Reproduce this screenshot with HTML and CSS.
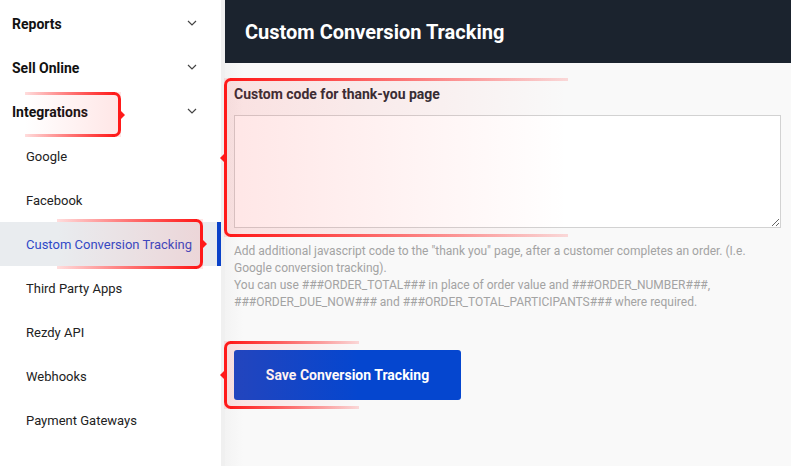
FILE: index.html
```html
<!DOCTYPE html>
<html>
<head>
<meta charset="utf-8">
<link rel="stylesheet" href="styles.css">
</head>
<body>
<div class="layout">
  <aside class="sidebar">
    <div class="nav-group">Reports<svg class="chev" viewBox="0 0 10 6"><path d="M1 1 L5 5 L9 1" fill="none" stroke="#444" stroke-width="1.2"/></svg></div>
    <div class="nav-group">Sell Online<svg class="chev" viewBox="0 0 10 6"><path d="M1 1 L5 5 L9 1" fill="none" stroke="#444" stroke-width="1.2"/></svg></div>
    <div class="nav-group">Integrations<svg class="chev" viewBox="0 0 10 6"><path d="M1 1 L5 5 L9 1" fill="none" stroke="#444" stroke-width="1.2"/></svg></div>
    <div class="nav-item">Google</div>
    <div class="nav-item">Facebook</div>
    <div class="nav-item active">Custom Conversion Tracking</div>
    <div class="nav-item">Third Party Apps</div>
    <div class="nav-item">Rezdy API</div>
    <div class="nav-item">Webhooks</div>
    <div class="nav-item">Payment Gateways</div>
  </aside>
  <main class="main">
    <header class="page-header">Custom Conversion Tracking</header>
    <section class="panel">
      <label class="field-label">Custom code for thank-you page</label>
      <textarea class="code-box"></textarea>
      <p class="help">Add additional javascript code to the "thank you" page, after a customer completes an order. (I.e. Google conversion tracking).<br>You can use ###ORDER_TOTAL### in place of order value and ###ORDER_NUMBER###, ###ORDER_DUE_NOW### and ###ORDER_TOTAL_PARTICIPANTS### where required.</p>
      <button class="save-btn">Save Conversion Tracking</button>
    </section>
  </main>
</div>

<div class="mark mark-right m1"><div class="fill"></div><div class="line top"></div><div class="line bottom"></div><div class="brace"></div><div class="tip"></div></div>
<div class="mark mark-right m2"><div class="fill"></div><div class="line top"></div><div class="line bottom"></div><div class="brace"></div><div class="tip"></div></div>
<div class="mark mark-left m3"><div class="fill"></div><div class="line top"></div><div class="line bottom"></div><div class="brace"></div><div class="tip"></div></div>
<div class="mark mark-left m4"><div class="fill"></div><div class="line top"></div><div class="line bottom"></div><div class="brace"></div><div class="tip"></div></div>
</body>
</html>
```

FILE: styles.css
```css
* { box-sizing: border-box; }
html, body { margin: 0; padding: 0; }
body {
  width: 791px;
  height: 466px;
  overflow: hidden;
  background: #f0f0f0;
  font-family: Roboto, "Liberation Sans", sans-serif;
  position: relative;
}
.layout {
  display: flex;
  height: 466px;
}
.sidebar {
  width: 221px;
  background: #fff;
  padding-top: 2px;
  flex-shrink: 0;
}
.nav-group {
  height: 44px;
  display: flex;
  align-items: center;
  justify-content: space-between;
  padding: 0 24px 0 12px;
  font-size: 14px;
  font-weight: 700;
  color: #111;
}
.chev { width: 10px; height: 6px; margin-top: -2px; }
.nav-item {
  height: 44px;
  display: flex;
  align-items: center;
  padding-left: 26px;
  font-size: 13px;
  color: #222;
  margin-right: 4px;
}
.nav-item.active {
  background: #e9ecef;
  color: #2f49c8;
  margin-right: 0;
  border-right: 4px solid #0a42c9;
}
.main {
  margin-left: 4px;
  flex: 1;
  display: flex;
  flex-direction: column;
  background: linear-gradient(to right, #f3f3f3, #f9f9f9 18px);
}
.page-header {
  height: 63px;
  background: #1b232e;
  color: #fff;
  font-size: 20px;
  font-weight: 700;
  display: flex;
  align-items: center;
  padding-left: 20px;
}
.panel {
  padding: 23px 10px 17px 9px;
  display: flex;
  flex-direction: column;
  align-items: flex-start;
}
.field-label {
  font-size: 14px;
  font-weight: 700;
  color: #2b2b33;
  line-height: 17px;
}
.code-box {
  margin-top: 12px;
  width: 100%;
  height: 113px;
  border: 1px solid #d2d2d2;
  background: #fff;
  resize: vertical;
  display: block;
}
.help {
  margin: 15px 0 0;
  font-size: 12px;
  line-height: 17px;
  color: #a3a3a3;
}
.save-btn {
  margin-top: 39px;
  width: 227px;
  height: 50px;
  border: none;
  border-radius: 3px;
  background: #0546cf;
  color: #fff;
  font-family: Roboto, "Liberation Sans", sans-serif;
  font-size: 14px;
  font-weight: 700;
}

/* annotation brackets */
.mark { position: absolute; pointer-events: none; }
.mark .fill { position: absolute; inset: 0; }
.mark .line { position: absolute; height: 3px; }
.mark .line.top { top: 0; }
.mark .line.bottom { bottom: 0; }
.mark .brace {
  position: absolute;
  top: 0; bottom: 0;
  width: 9px;
  border: 3px solid #ff1a1a;
}
.mark .tip {
  position: absolute;
  top: 50%;
  width: 0; height: 0;
  margin-top: -4px;
  border-top: 4px solid transparent;
  border-bottom: 4px solid transparent;
}
.mark-left .fill { background: linear-gradient(to right, rgba(255, 60, 60, 0.13), rgba(255, 60, 60, 0)); }
.mark-left .line { left: 6px; right: 0; background: linear-gradient(to right, #ff1a1a, rgba(255, 26, 26, 0.15)); }
.mark-left .brace { left: 0; border-right: none; border-radius: 7px 0 0 7px; }
.mark-left .tip { left: -4px; border-right: 4px solid #ff1a1a; }

.mark-right .fill { background: linear-gradient(to left, rgba(255, 60, 60, 0.13), rgba(255, 60, 60, 0)); }
.mark-right .line { right: 6px; left: 0; background: linear-gradient(to left, #ff1a1a, rgba(255, 26, 26, 0.15)); }
.mark-right .brace { right: 0; border-left: none; border-radius: 0 7px 7px 0; }
.mark-right .tip { right: -4px; border-left: 4px solid #ff1a1a; }

.m1 { left: 25px; top: 92px; width: 96px; height: 45px; }
.m2 { left: 57px; top: 219px; width: 146px; height: 50px; }
.m3 { left: 224px; top: 78px; width: 344px; height: 159px; }
.m4 { left: 224px; top: 341px; width: 135px; height: 68px; }
```
